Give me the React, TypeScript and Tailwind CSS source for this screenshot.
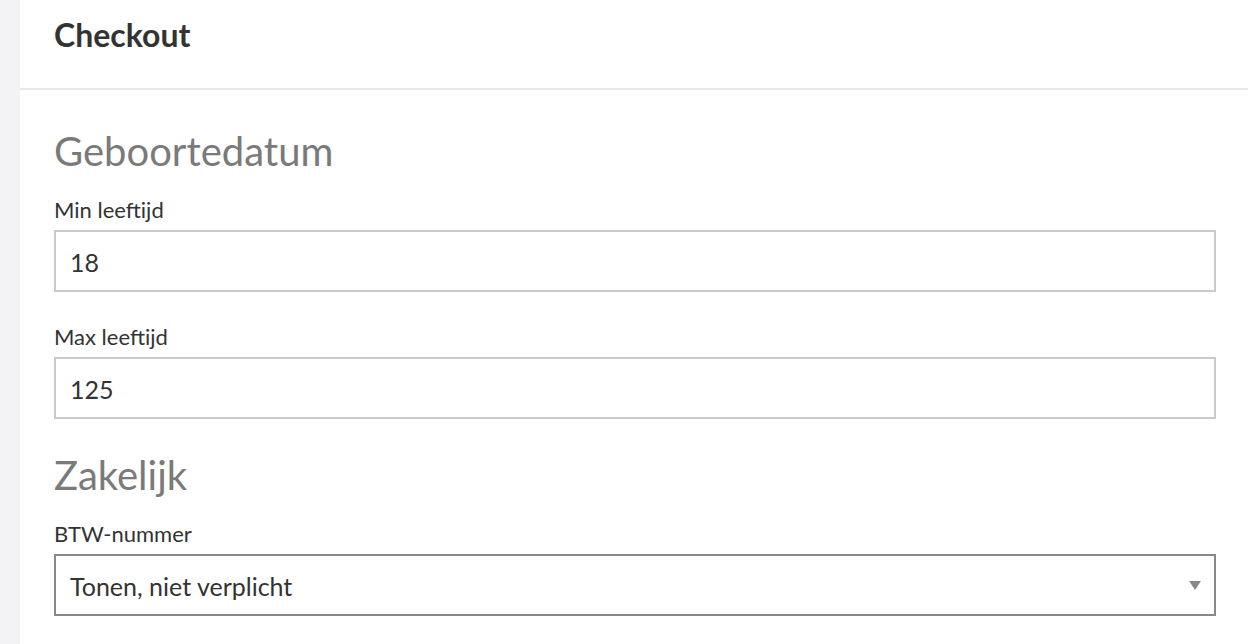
export default function App() {
  const font = { fontFamily: "Lato, 'Noto Sans', sans-serif" };
  return (
    <div className="flex h-[644px] w-[1248px] overflow-hidden bg-[#f3f3f5]" style={font}>
      <div className="w-[20px] shrink-0" />
      <div className="flex flex-1 flex-col bg-white">
        <header className="flex h-[90px] shrink-0 items-start border-b-2 border-[#e8e8e8] pl-[34px] pt-[16px]">
          <h1 className="text-[32px] font-bold leading-[38px] text-[#333]">Checkout</h1>
        </header>
        <div className="flex flex-col pl-[34px] pr-[32px]">
          <h2 className="mt-[38px] text-[40px] leading-[46px] text-[#7a7a7a]">Geboortedatum</h2>
          <label className="mt-[24px] text-[22px] leading-[24px] text-[#333]">Min leeftijd</label>
          <div className="mt-[8px] flex h-[62px] items-center border-2 border-[#cacaca] pb-[0px] pl-[14px] pt-[3px] text-[25px] text-[#333]">
            18
          </div>
          <label className="mt-[33px] text-[22px] leading-[24px] text-[#333]">Max leeftijd</label>
          <div className="mt-[8px] flex h-[62px] items-center border-2 border-[#cacaca] pl-[14px] pt-[3px] text-[25px] text-[#333]">
            125
          </div>
          <h2 className="mt-[33px] text-[40px] leading-[46px] text-[#7a7a7a]">Zakelijk</h2>
          <label className="mt-[24px] text-[22px] leading-[24px] text-[#333]">BTW-nummer</label>
          <div className="mt-[8px] flex h-[62px] items-center justify-between border-2 border-[#888] pl-[14px] pr-[13px] text-[25px] text-[#333]">
            <span className="pt-[3px]">Tonen, niet verplicht</span>
            <svg width="12" height="9" viewBox="0 0 12 9">
              <path d="M0 0 H12 L6 9 Z" fill="#888" />
            </svg>
          </div>
        </div>
      </div>
    </div>
  );
}
